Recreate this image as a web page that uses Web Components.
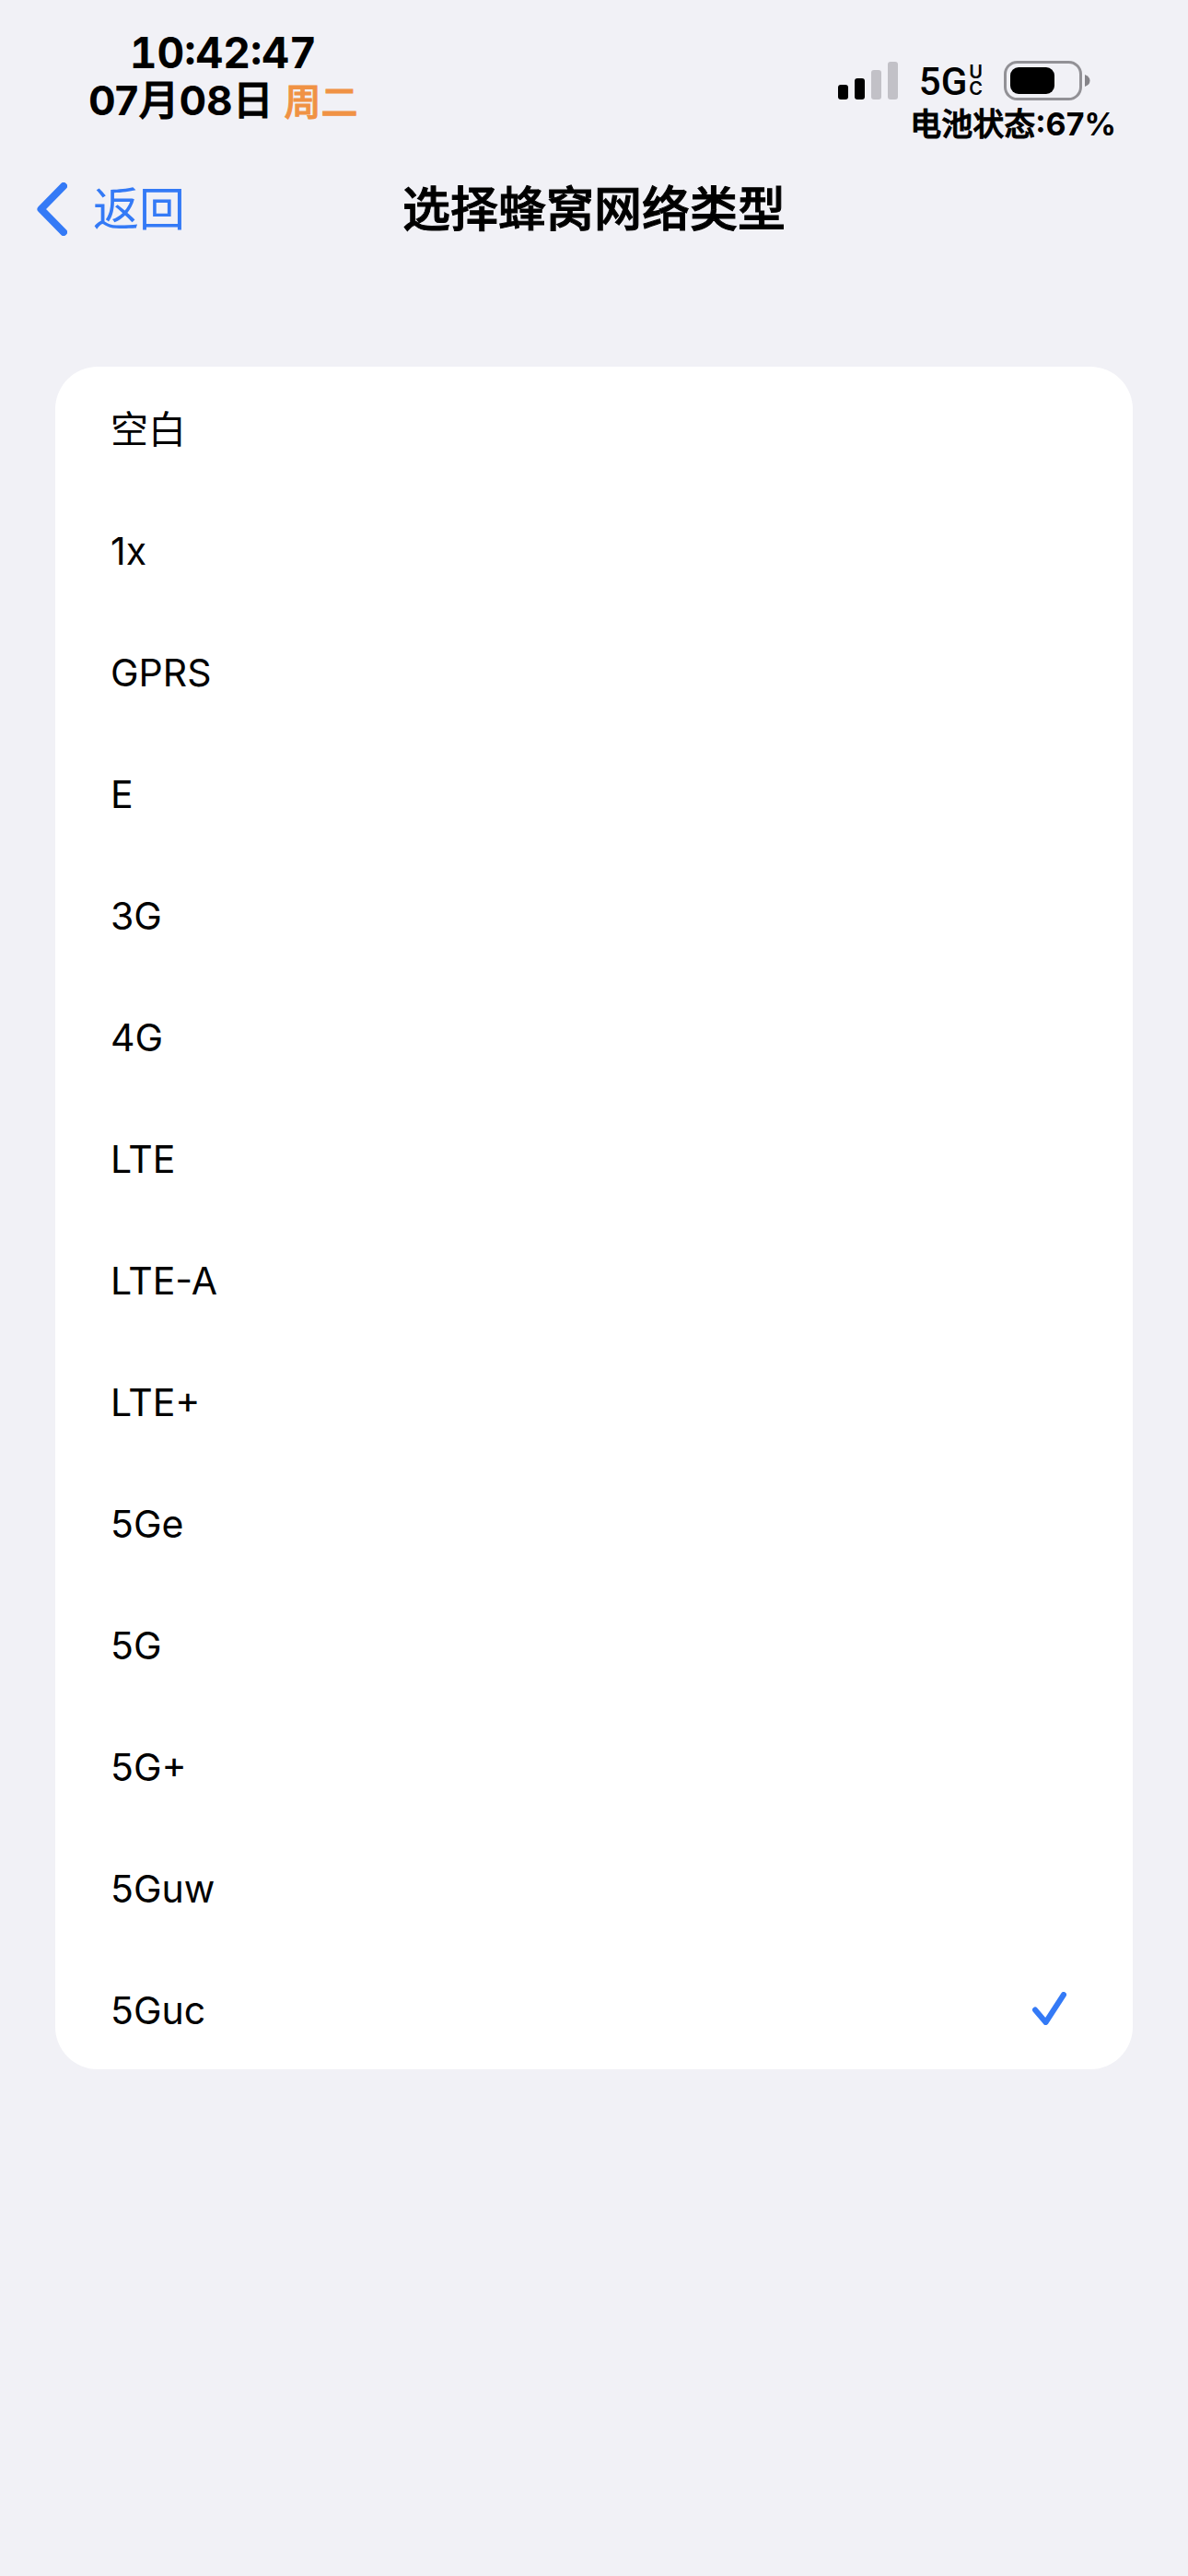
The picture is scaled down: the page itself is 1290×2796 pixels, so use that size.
<!DOCTYPE html>
<html lang="zh-CN">
<head>
<meta charset="utf-8">
<meta name="viewport" content="width=device-width, initial-scale=1">
<title>选择蜂窝网络类型</title>
<style>
  html { background: #f1f1f6; }
  body {
    margin: 0;
    color: #000;
    font-family: Inter, "Noto Sans CJK SC", sans-serif;
  }
</style>
</head>
<body>
<network-page></network-page>

<script>
class SignalBars extends HTMLElement {
  connectedCallback() {
    const level = Number(this.getAttribute("level"));
    const heights = [16, 23, 32, 41];
    const bars = heights.map((h, i) =>
      `<rect x="${i * 18}" y="${41 - h}" width="11" height="${h}" rx="3" fill="${i < level ? "#000" : "#c2c1c7"}"/>`
    ).join("");
    this.attachShadow({ mode: "open" }).innerHTML = `
      <style>:host { display: block; } svg { display: block; }</style>
      <svg width="65" height="41" viewBox="0 0 65 41" aria-hidden="true">${bars}</svg>`;
  }
}
customElements.define("signal-bars", SignalBars);

class NetworkBadge extends HTMLElement {
  connectedCallback() {
    this.attachShadow({ mode: "open" }).innerHTML = `
      <style>
        :host { display: flex; align-items: center; gap: 2px; }
        .main { font: 500 42px/44px Roboto, sans-serif; padding-top: 3px; }
        .suffix { display: flex; flex-direction: column; align-items: center; font-weight: 600; font-size: 20px; line-height: 18px; }
      </style>
      <span class="main">5G</span>
      <span class="suffix"><span>U</span><span>C</span></span>`;
  }
}
customElements.define("network-badge", NetworkBadge);

class BatteryIcon extends HTMLElement {
  connectedCallback() {
    const width = Math.round(72 * Number(this.getAttribute("level")) / 100);
    this.attachShadow({ mode: "open" }).innerHTML = `
      <style>:host { display: block; } svg { display: block; }</style>
      <svg width="94" height="43" viewBox="0 0 94 43" aria-hidden="true">
        <rect x="1.5" y="1.5" width="82" height="40" rx="13" fill="none" stroke="#929196" stroke-width="3"/>
        <rect x="7" y="7" width="${width}" height="29" rx="9" fill="#000"/>
        <path d="M88 15 Q93.500 17 93.500 21.500 Q93.500 26 88 28 Z" fill="#858489"/>
      </svg>`;
  }
}
customElements.define("battery-icon", BatteryIcon);

class StatusBar extends HTMLElement {
  connectedCallback() {
    this.attachShadow({ mode: "open" }).innerHTML = `
      <style>
        :host { display: flex; justify-content: space-between; padding: 31px 78px 2px 96px; }
        b { font-weight: 700; -webkit-text-stroke: 0; }
        .clock { display: flex; flex-direction: column; align-items: center; line-height: 52px; font-size: 44px; }
        .time { font-size: 46px; font-weight: 700; font-variant-numeric: tabular-nums; }
        .date { font-weight: 500; -webkit-text-stroke: 1px currentColor; }
        .weekday { color: #f09244; font-size: 40px; }
        .state { display: flex; flex-direction: column; align-items: flex-end; padding-top: 32px; }
        .icons { display: flex; align-items: center; gap: 23px; height: 48px; padding-right: 28px; }
        .caption { font-size: 34px; line-height: 48px; font-weight: 500; -webkit-text-stroke: 1px currentColor; }
      </style>
      <div class="clock">
        <span class="time">10:42:47</span>
        <span class="date"><b>07</b>月<b>08</b>日 <span class="weekday">周二</span></span>
      </div>
      <div class="state">
        <div class="icons">
          <signal-bars level="2"></signal-bars>
          <network-badge></network-badge>
          <battery-icon level="67"></battery-icon>
        </div>
        <span class="caption">电池状态<b>:67%</b></span>
      </div>`;
  }
}
customElements.define("status-bar", StatusBar);

class NavBar extends HTMLElement {
  connectedCallback() {
    this.attachShadow({ mode: "open" }).innerHTML = `
      <style>
        :host { display: grid; grid-template-columns: 1fr auto 1fr; align-items: center; height: 132px; padding: 0 40px; }
        button { all: unset; display: flex; align-items: center; gap: 28px; justify-self: start; color: #347af6; font-size: 50px; line-height: 72px; cursor: pointer; }
        svg { display: block; }
        h1 { margin: 0; padding-top: 2px; font-size: 52px; line-height: 72px; font-weight: 500; -webkit-text-stroke: 1px currentColor; }
      </style>
      <button type="button">
        <svg width="33" height="58" viewBox="0 0 33 58" fill="none" stroke="currentColor" stroke-width="8" stroke-linecap="round" stroke-linejoin="round" aria-hidden="true"><path d="M29 4 L4.500 29 L29 54"/></svg>
        <span>返回</span>
      </button>
      <h1><slot></slot></h1>`;
  }
}
customElements.define("nav-bar", NavBar);

class OptionRow extends HTMLElement {
  connectedCallback() {
    this.attachShadow({ mode: "open" }).innerHTML = `
      <style>
        :host { display: block; }
        label { display: flex; align-items: center; justify-content: space-between; height: 132px; padding: 0 72px 0 60px; font-size: 41px; line-height: 56px; cursor: pointer; }
        input { appearance: none; margin: 0; width: 0; height: 0; order: 1; }
        svg { display: none; order: 2; }
        span { flex: 1; padding-top: 3px; }
        input:checked ~ svg { display: block; }
      </style>
      <label>
        <input type="radio" name="network" ${this.hasAttribute("checked") ? "checked" : ""}>
        <span><slot></slot></span>
        <svg width="37" height="36" viewBox="0 0 37 36" fill="none" stroke="#347af6" stroke-width="6" stroke-linecap="round" stroke-linejoin="round" aria-hidden="true"><path d="M3 19.500 L14.500 33 L34 3"/></svg>
      </label>`;
    this.input = this.shadowRoot.querySelector("input");
    this.input.addEventListener("change", () =>
      this.dispatchEvent(new CustomEvent("option-select", { bubbles: true, composed: true })));
  }
}
customElements.define("option-row", OptionRow);

class OptionCard extends HTMLElement {
  connectedCallback() {
    this.attachShadow({ mode: "open" }).innerHTML = `
      <style>:host { display: block; background: #fff; border-radius: 46px; overflow: hidden; }</style>
      <slot></slot>`;
    this.addEventListener("option-select", (event) => {
      for (const row of this.children) row.input.checked = row === event.target;
    });
  }
}
customElements.define("option-card", OptionCard);

class NetworkPage extends HTMLElement {
  connectedCallback() {
    const types = ["空白", "1x", "GPRS", "E", "3G", "4G", "LTE", "LTE-A", "LTE+", "5Ge", "5G", "5G+", "5Guw", "5Guc"];
    this.attachShadow({ mode: "open" }).innerHTML = `
      <style>
        :host { display: flex; flex-direction: column; min-height: 100vh; background: #f1f1f6; }
        main { padding: 105px 60px; }
      </style>
      <status-bar></status-bar>
      <nav-bar>选择蜂窝网络类型</nav-bar>
      <main>
        <option-card role="radiogroup" aria-label="选择蜂窝网络类型">
          ${types.map((t) => `<option-row ${t === "5Guc" ? "checked" : ""}>${t}</option-row>`).join("")}
        </option-card>
      </main>`;
  }
}
customElements.define("network-page", NetworkPage);
</script>
</body>
</html>
